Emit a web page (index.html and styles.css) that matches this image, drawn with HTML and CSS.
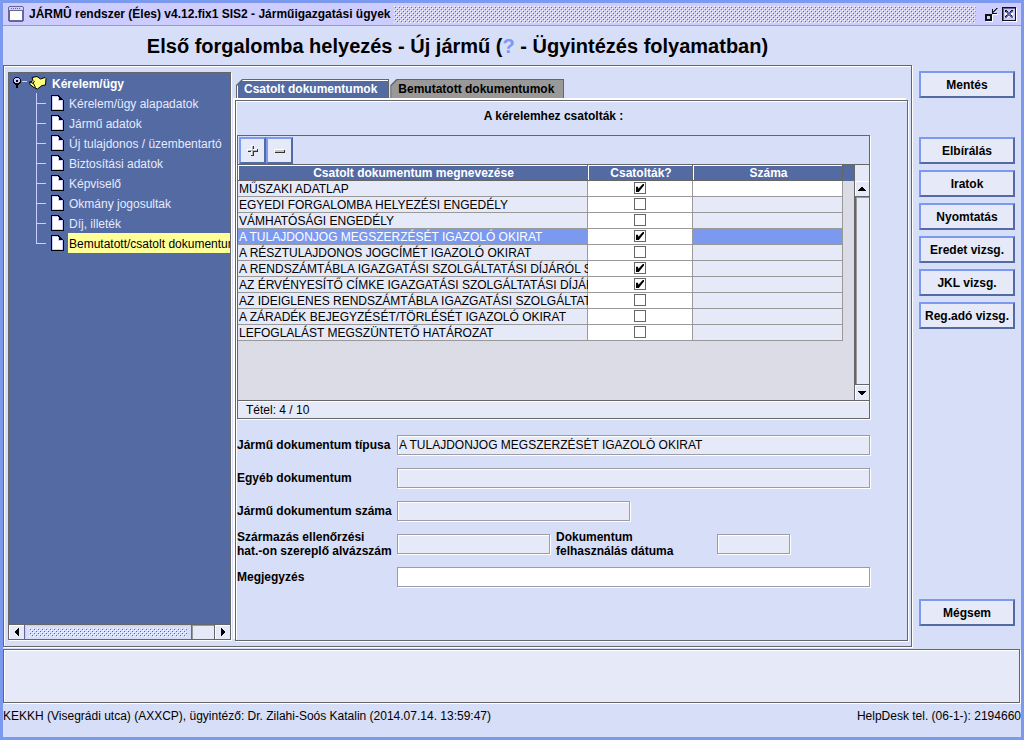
FILE: index.html
```html
<!DOCTYPE html>
<html lang="hu">
<head>
<meta charset="utf-8">
<title>Járműigazgatási ügyek</title>
<link rel="stylesheet" href="styles.css">
</head>
<body>
<svg class="defs" width="0" height="0" aria-hidden="true">
  <defs>
    <pattern id="bumps" width="4" height="4" patternUnits="userSpaceOnUse">
      <path fill="#ffffff" d="M0 0h1v1h-1zM2 2h1v1h-1z"/>
      <path fill="#666699" d="M1 1h1v1h-1zM3 3h1v1h-1z"/>
    </pattern>
    <symbol id="file" viewBox="0 0 13 16" shape-rendering="crispEdges">
      <path fill="#000" d="M0 0h8v1h1v1h1v1h1v1h1v1h1v11h-13z"/>
      <path fill="#ccccff" d="M1 1h7v4h4v10h-11z"/>
      <path fill="#fff" d="M2 2h5v4h4v8h-9z"/>
      <path fill="#000" d="M8 2h1v1h-1zM9 3h1v1h-1zM10 4h1v1h-1zM7 1h1v1h-1z"/>
    </symbol>
  </defs>
</svg>
<div class="window">
  <header class="titlebar">
    <svg class="app-icon" width="16" height="16" viewBox="0 0 16 16" shape-rendering="crispEdges" aria-hidden="true">
      <path fill="#666699" d="M1 0h14v1h1v14h-1v1h-14v-1h-1v-14h1z"/>
      <path fill="#ccccff" d="M1 1h14v3h-14z"/>
      <path fill="#fff" d="M2 5h12v9h-12z"/>
      <path fill="#666699" d="M3 2h1v1h-1zM5 2h1v1h-1zM7 2h1v1h-1zM9 2h1v1h-1zM11 2h1v1h-1z"/>
    </svg>
    <span class="title">JÁRMÛ rendszer (Éles) v4.12.fix1 SIS2 - Járműigazgatási ügyek</span>
    <svg class="grip" height="17" aria-hidden="true"><rect width="100%" height="17" fill="url(#bumps)"/></svg>
    <button class="win-btn" aria-label="Kis méret">
      <svg width="15" height="15" viewBox="0 0 15 15" shape-rendering="crispEdges">
        <path fill="#fff" d="M2 14h6v-6h1v7h-7zM9 7h5v1h-5z"/>
        <path fill="#111" d="M1 7h7v7h-7zM8 2h1v4h4v1h-5z"/>
        <path fill="#ccccff" d="M3 9h3v3h-3z"/>
        <path fill="#666699" d="M9 5h1v-1h1v-1h1v-1h1v-1h1v1h-1v1h-1v1h-1v1h-1v1h-1z"/>
        <path fill="#111" d="M9 4h1v-1h1v-1h1v-1h1v1h-1v1h-1v1h-1v1h-1z"/>
      </svg>
    </button>
    <button class="win-btn" aria-label="Bezárás">
      <svg width="15" height="15" viewBox="0 0 15 15" shape-rendering="crispEdges">
        <path fill="#fff" d="M1 1h14v14h-14z"/>
        <path fill="#111" d="M0 0h14v14h-14z"/>
        <path fill="#666699" d="M1 1h12v12h-12z"/>
        <path fill="#ccccff" d="M2 2h11v11h-11z"/>
        <path fill="#fff" d="M4 11h2v-1h1v-1h1v1h1v1h3v-1h-1v-1h-1v-1h1v-2h-8v2h1v2h-1z"/>
        <path fill="#666699" d="M3 3h2v1h1v1h2v-1h1v-1h2v2h-1v1h-1v2h1v1h1v2h-2v-1h-1v-1h-2v1h-1v1h-2v-2h1v-1h1v-2h-1v-1h-1z"/>
        <path fill="#111" d="M3 3h2v1h-1v1h-1zM5 4h1v1h-1zM9 3h2v1h-2zM8 4h1v1h-1zM3 9h1v1h-1zM4 8h1v1h-1zM9 8h1v1h-1z"/>
      </svg>
    </button>
  </header>

  <div class="body">
    <main class="left">
      <h1>Első forgalomba helyezés - Új jármű (<span class="mark">?</span> - Ügyintézés folyamatban)</h1>
      <div class="work">
        <nav class="tree" aria-label="Ügy">
          <div class="tree-view">
            <div class="root">
              <svg width="34" height="16" viewBox="0 0 34 16" aria-hidden="true">
                <g shape-rendering="crispEdges">
                  <path fill="#000" d="M2 2h4v1h1v1h1v4h-1v1h-1v1h-1v3h-2v-3h-1v-1h-1v-1h-1v-4h1v-1h1z"/>
                  <path fill="#ccccff" d="M2 3h4v1h1v3h-1v1h-4v-1h-1v-3h1z"/>
                  <path fill="#000" d="M3 5h2v2h-2z"/>
                  <path fill="#ccccff" d="M9 6h5v1h-5z"/>
                </g>
                <path fill="#ffff80" stroke="#000" stroke-width="1" stroke-linejoin="round" d="M19 2.500L24 1.500L27.500 4L32 2.500L33 3.500L32.500 10L29 10.500L24.500 14L21 12.500L17 9.500L16.500 7L19 6.500L20 5.500Z"/>
                <path fill="none" stroke="#000" d="M17 7L20.500 8.500L22.500 12.500M20 8.500L21.500 6"/>
              </svg>
              <span>Kérelem/ügy</span>
            </div>
            <ul>
              <li><svg width="13" height="16" aria-hidden="true"><use href="#file"/></svg><span>Kérelem/ügy alapadatok</span></li>
              <li><svg width="13" height="16" aria-hidden="true"><use href="#file"/></svg><span>Jármű adatok</span></li>
              <li><svg width="13" height="16" aria-hidden="true"><use href="#file"/></svg><span>Új tulajdonos / üzembentartó</span></li>
              <li><svg width="13" height="16" aria-hidden="true"><use href="#file"/></svg><span>Biztosítási adatok</span></li>
              <li><svg width="13" height="16" aria-hidden="true"><use href="#file"/></svg><span>Képviselő</span></li>
              <li><svg width="13" height="16" aria-hidden="true"><use href="#file"/></svg><span>Okmány jogosultak</span></li>
              <li><svg width="13" height="16" aria-hidden="true"><use href="#file"/></svg><span>Díj, illeték</span></li>
              <li class="selected"><svg width="13" height="16" aria-hidden="true"><use href="#file"/></svg><span>Bemutatott/csatolt dokumentumok</span></li>
            </ul>
          </div>
          <div class="hscroll">
            <button class="arrow" aria-label="Balra"><svg width="4" height="8" viewBox="0 0 4 8" shape-rendering="crispEdges"><path d="M3 0h1v8h-1v-1h-1v-1h-1v-1h-1v-2h1v-1h1v-1h1z"/></svg></button>
            <div class="hthumb"><svg width="100%" height="9" aria-hidden="true"><rect width="100%" height="9" fill="url(#bumps)"/></svg></div>
            <div class="htrack"></div>
            <button class="arrow" aria-label="Jobbra"><svg width="4" height="8" viewBox="0 0 4 8" shape-rendering="crispEdges"><path d="M0 0h1v1h1v1h1v1h1v2h-1v1h-1v1h-1v1h-1z"/></svg></button>
          </div>
        </nav>

        <section class="pane">
          <div class="tabs" role="tablist">
            <button class="tab active" role="tab" aria-selected="true"><span>Csatolt dokumentumok</span></button>
            <button class="tab" role="tab" aria-selected="false"><span>Bemutatott dokumentumok</span></button>
          </div>
          <div class="page">
            <h2>A kérelemhez csatolták :</h2>
            <div class="list">
              <div class="tools">
                <button class="tool" aria-label="Hozzáadás"><svg width="11" height="11" viewBox="0 0 11 11" shape-rendering="crispEdges"><path fill="#333" d="M5 1h2v3h4v3h-4v4h-3v-4h-3v-2h4z"/><path fill="#fff" d="M4 0h2v4h4v2h-4v4h-2v-4h-4v-2h4z"/><path fill="#b5b5b5" d="M5 1h1v4h4v1h-4v4h-1v-4h-4v-1h4z"/></svg></button>
                <button class="tool" aria-label="Törlés"><svg width="12" height="12" viewBox="0 0 12 12" shape-rendering="crispEdges"><path fill="#333" d="M1 5h10v3h-10z"/><path fill="#fff" d="M0 4h10v3h-10z"/><path fill="#c5c5c0" d="M1 5h9v2h-9z"/></svg></button>
              </div>
              <div class="scroller">
                <div class="viewport">
                  <table>
                    <colgroup><col><col class="c-check"><col class="c-number"></colgroup>
                    <thead><tr><th>Csatolt dokumentum megnevezése</th><th>Csatolták?</th><th>Száma</th></tr></thead>
                    <tbody>
                      <tr><td>MŰSZAKI ADATLAP</td><td><input type="checkbox" aria-label="Műszaki adatlap" checked></td><td class="editable"></td></tr>
                      <tr><td>EGYEDI FORGALOMBA HELYEZÉSI ENGEDÉLY</td><td><input type="checkbox" aria-label="Egyedi forgalomba helyezési engedély"></td><td></td></tr>
                      <tr><td>VÁMHATÓSÁGI ENGEDÉLY</td><td><input type="checkbox" aria-label="Vámhatósági engedély"></td><td></td></tr>
                      <tr class="current"><td>A TULAJDONJOG MEGSZERZÉSÉT IGAZOLÓ OKIRAT</td><td><input type="checkbox" aria-label="A tulajdonjog megszerzését igazoló okirat" checked></td><td></td></tr>
                      <tr><td>A RÉSZTULAJDONOS JOGCÍMÉT IGAZOLÓ OKIRAT</td><td><input type="checkbox" aria-label="A résztulajdonos jogcímét igazoló okirat"></td><td></td></tr>
                      <tr><td>A RENDSZÁMTÁBLA IGAZGATÁSI SZOLGÁLTATÁSI DÍJÁRÓL SZ</td><td><input type="checkbox" aria-label="A rendszámtábla díja" checked></td><td></td></tr>
                      <tr><td>AZ ÉRVÉNYESÍTŐ CÍMKE IGAZGATÁSI SZOLGÁLTATÁSI DÍJÁRÓL</td><td><input type="checkbox" aria-label="Az érvényesítő címke díja" checked></td><td></td></tr>
                      <tr><td>AZ IDEIGLENES RENDSZÁMTÁBLA IGAZGATÁSI SZOLGÁLTATÁSI</td><td><input type="checkbox" aria-label="Az ideiglenes rendszámtábla díja"></td><td></td></tr>
                      <tr><td>A ZÁRADÉK BEJEGYZÉSÉT/TÖRLÉSÉT IGAZOLÓ OKIRAT</td><td><input type="checkbox" aria-label="A záradék bejegyzését/törlését igazoló okirat"></td><td></td></tr>
                      <tr><td>LEFOGLALÁST MEGSZÜNTETŐ HATÁROZAT</td><td><input type="checkbox" aria-label="Lefoglalást megszüntető határozat"></td><td></td></tr>
                    </tbody>
                  </table>
                </div>
                <div class="vscroll">
                  <button class="arrow" aria-label="Fel"><svg width="8" height="4" viewBox="0 0 8 4" shape-rendering="crispEdges"><path d="M3 0h2v1h1v1h1v1h1v1h-8v-1h1v-1h1v-1h1z"/></svg></button>
                  <div class="vtrack"></div>
                  <button class="arrow" aria-label="Le"><svg width="8" height="4" viewBox="0 0 8 4" shape-rendering="crispEdges"><path d="M0 0h8v1h-1v1h-1v1h-1v1h-2v-1h-1v-1h-1v-1h-1z"/></svg></button>
                </div>
              </div>
              <div class="count">Tétel: 4 / 10</div>
            </div>

            <form class="form">
              <div class="row"><label for="type">Jármű dokumentum típusa</label><input id="type" class="wide" type="text" value="A TULAJDONJOG MEGSZERZÉSÉT IGAZOLÓ OKIRAT" readonly></div>
              <div class="row"><label for="other">Egyéb dokumentum</label><input id="other" class="wide" type="text" readonly></div>
              <div class="row"><label for="number">Jármű dokumentum száma</label><input id="number" class="medium" type="text" readonly></div>
              <div class="row"><label for="origin">Származás ellenőrzési<br>hat.-on szereplő alvázszám</label><input id="origin" class="short" type="text" readonly><label class="second" for="date">Dokumentum<br>felhasználás dátuma</label><input id="date" class="date" type="text" readonly></div>
              <div class="row"><label for="note">Megjegyzés</label><input id="note" class="wide" type="text"></div>
            </form>
          </div>
        </section>
      </div>
    </main>

    <aside class="actions">
      <button class="first">Mentés</button>
      <button>Elbírálás</button>
      <button>Iratok</button>
      <button>Nyomtatás</button>
      <button>Eredet vizsg.</button>
      <button>JKL vizsg.</button>
      <button>Reg.adó vizsg.</button>
      <button class="last">Mégsem</button>
    </aside>
  </div>

  <div class="messages"></div>
  <footer class="status">
    <span>KEKKH (Visegrádi utca) (AXXCP), ügyintéző: Dr. Zilahi-Soós Katalin (2014.07.14. 13:59:47)</span>
    <span>HelpDesk tel. (06-1-): 2194660</span>
  </footer>
</div>
</body>
</html>
```
FILE: styles.css
```css
:root {
  --bg: #d7def7;
  --field: #e6eaf8;
  --light-blue: #7b99ee;
  --dark-blue: #536aa3;
  --line: #666;
  --grid: #999;
}

* { box-sizing: border-box; }

body {
  margin: 0;
  font: 12px/14px "Liberation Sans", Arial, sans-serif;
  color: #000;
}

button, input { font: inherit; color: inherit; margin: 0; }
button { padding: 0; }
svg { display: block; flex: none; }
.defs { position: absolute; }

.window {
  display: flex;
  flex-direction: column;
  min-height: 100vh;
  background: var(--bg);
  border: 3px solid var(--light-blue);
}

/* Title bar */
.titlebar {
  display: flex;
  align-items: center;
  height: 23px;
  padding: 0 4px 0 5px;
  background: #ccccff;
  border-bottom: 1px solid #9999cc;
}
.title { margin: 0 4px 0 5px; font-weight: bold; white-space: nowrap; }
.grip { flex: 1; min-width: 0; margin-right: 5px; }
.win-btn { margin-left: 3px; border: 0; background: none; }

/* Main area */
.body { display: flex; flex: 1; }
.left { display: flex; flex: 1; flex-direction: column; min-width: 0; }
h1 {
  margin: 0;
  height: 39px;
  font-size: 20px;
  line-height: 40px;
  text-align: center;
  white-space: nowrap;
}
.mark { color: var(--light-blue); }

.work {
  display: flex;
  flex: 1;
  gap: 2px;
  margin-bottom: 2px;
  padding: 6px 1px 2px 4px;
  border: 1px solid var(--line);
  box-shadow: 1px 1px 0 #fff, inset 1px 1px 0 #fff;
}

/* Tree */
.tree {
  display: flex;
  flex: none;
  flex-direction: column;
  width: 223px;
  margin-bottom: 4px;
  border: 1px solid var(--line);
  box-shadow: 1px 1px 0 #fff;
  background: var(--dark-blue);
  color: #e6eaff;
}
.tree-view { flex: 1; overflow: hidden; white-space: nowrap; }
.root {
  display: flex;
  align-items: center;
  gap: 5px;
  height: 20px;
  padding-left: 4px;
  font-weight: bold;
  color: #fff;
}
.root span { padding-top: 2px; }
.tree ul { margin: 0; padding: 0 0 0 27px; list-style: none; }
.tree li { display: flex; align-items: center; height: 20px; }
.tree li::before {
  content: "";
  flex: none;
  width: 10px;
  height: 20px;
  margin-right: 5px;
  background:
    linear-gradient(#ccccff, #ccccff) 0 0 / 1px 100% no-repeat,
    linear-gradient(#ccccff, #ccccff) 0 10px / 10px 1px no-repeat;
}
.tree li:last-child::before {
  background:
    linear-gradient(#ccccff, #ccccff) 0 0 / 1px 10px no-repeat,
    linear-gradient(#ccccff, #ccccff) 0 10px / 10px 1px no-repeat;
}
.tree li span { margin-left: 4px; padding: 4px 0 2px 1px; }
.tree .selected span { background: #ffff99; color: #000; }

/* Scroll bars */
.arrow {
  display: flex;
  flex: none;
  align-items: center;
  justify-content: center;
  width: 15px;
  height: 15px;
  border: 0;
  background: var(--field);
  box-shadow: inset 1px 1px 0 #fff;
}
.hscroll { display: flex; height: 15px; border-top: 1px solid var(--line); }
.hscroll .arrow { height: 14px; }
.hthumb {
  flex: 1;
  min-width: 0;
  padding: 3px 4px;
  border: 1px solid #666699;
  border-width: 0 1px;
  box-shadow: inset 1px 1px 0 #ccccff;
  background: var(--bg);
}
.htrack {
  width: 23px;
  border-right: 1px solid var(--line);
  background: var(--field);
  box-shadow: inset 1px 1px 0 var(--grid);
}
.vscroll {
  display: flex;
  flex-direction: column;
  width: 15px;
  padding-top: 16px;
  border-left: 1px solid var(--line);
  background: var(--field);
}
.vscroll .arrow { width: 14px; }
.vtrack {
  flex: 1;
  border: 1px solid var(--line);
  border-right: 0;
  box-shadow: inset 1px 1px 0 var(--grid);
}

/* Tabbed pane */
.pane { display: flex; flex: 1; flex-direction: column; min-width: 0; padding-top: 7px; }
.tabs { display: flex; gap: 1px; padding-left: 3px; }
.tab {
  height: 19px;
  padding: 1px 1px 0;
  border: 0;
  background: var(--line);
  clip-path: polygon(6px 0, 100% 0, 100% 100%, 0 100%, 0 6px);
  font-weight: bold;
  color: #000;
}
.tab span {
  display: block;
  height: 18px;
  padding: 0 9px 0 7px;
  line-height: 18px;
  background: #999;
  clip-path: polygon(6px 0, 100% 0, 100% 100%, 0 100%, 0 6px);
}
.tab.active { color: #fff; }
.tab.active span { padding-right: 11px; background: var(--dark-blue); box-shadow: inset 1px 1px 0 #fff; }
.page {
  flex: 1;
  margin: 2px 2px 3px;
  padding: 0 37px 20px 1px;
  border: 1px solid var(--line);
  box-shadow: 1px 1px 0 #fff, inset 1px 1px 0 #fff, -2px -2px 0 #fff;
}
h2 {
  margin: 0;
  height: 34px;
  font-size: 12px;
  line-height: 30px;
  text-align: center;
}

/* Document list */
.list { border: 1px solid var(--line); box-shadow: 1px 1px 0 #fff; }
.tools { display: flex; padding: 1px 1px 0; height: 28px; }
.tool, .actions button {
  border: 2px solid;
  border-color: var(--light-blue) var(--dark-blue) var(--dark-blue) var(--light-blue);
  background: var(--field);
}
.tool { display: flex; align-items: center; justify-content: center; width: 27px; height: 27px; }
.scroller {
  display: flex;
  height: 237px;
  border: 1px solid var(--line);
  border-width: 1px 0;
}
.viewport {
  flex: 1;
  min-width: 0;
  padding-right: 11px;
  background: linear-gradient(var(--dark-blue), var(--dark-blue)) 0 0 / 100% 16px no-repeat #dcdce6;
}
table { width: 100%; table-layout: fixed; border-spacing: 0; }
.c-check { width: 105px; }
.c-number { width: 150px; }
th, td {
  height: 16px;
  padding: 0 0 0 1px;
  overflow: hidden;
  line-height: 16px;
  white-space: nowrap;
}
th {
  color: #fff;
  background: var(--dark-blue);
  box-shadow: inset -1px -1px 0 var(--line), inset 1px 1px 0 #fff;
}
td { background: var(--field); box-shadow: inset -1px -1px 0 var(--grid); }
td:nth-child(2), td.editable { background: #fff; }
td:nth-child(2) { padding: 0 1px 1px 0; text-align: center; line-height: 15px; font-size: 0; }
.current td { background: var(--light-blue); color: #fff; }
.current td:nth-child(2) { background: #fff; }

td input {
  appearance: none;
  width: 12px;
  height: 12px;
  vertical-align: middle;
  border: 1px solid var(--line);
  background: #fff;
}
td input:checked::before {
  content: "";
  display: block;
  width: 8px;
  height: 8px;
  margin: 1px;
  background: #000;
  clip-path: polygon(0 35%, 25% 35%, 30% 60%, 85% 0, 100% 0, 100% 20%, 35% 100%, 0 100%);
}
.count {
  height: 17px;
  padding-left: 8px;
  line-height: 18px;
  background: var(--field);
  box-shadow: inset 0 1px 0 #fff;
}

/* Details form */
.form { display: flex; flex-direction: column; gap: 13px; margin-top: 16px; }
.row { display: flex; align-items: center; height: 20px; }
.row label { flex: none; width: 160px; font-weight: bold; white-space: nowrap; }
.row .second { margin-left: 6px; width: 161px; }
.row input {
  height: 20px;
  padding: 0 1px;
  border: 1px solid #9c9ca5;
  border-radius: 0;
  background: #fff;
  box-shadow: 1px 1px 0 #fff, inset 1px 1px 0 #fff;
}
.row input:read-only { background: var(--field); }
.wide { flex: 1; min-width: 0; }
.medium { width: 233px; }
.short { width: 153px; }
.date { width: 73px; }

/* Action buttons */
.actions {
  display: flex;
  flex: none;
  flex-direction: column;
  gap: 6px;
  width: 109px;
  padding: 45px 6px 23px 7px;
}
.actions button { height: 27px; font-weight: bold; white-space: nowrap; }
.actions .first { margin-bottom: 33px; }
.actions .last { margin-top: auto; }

/* Bottom */
.messages {
  height: 54px;
  margin-right: 1px;
  border: 1px solid var(--line);
  box-shadow: 1px 1px 0 #fff, inset 1px 1px 0 #fff;
  background: var(--field);
}
.status { display: flex; justify-content: space-between; height: 34px; line-height: 26px; }
```
